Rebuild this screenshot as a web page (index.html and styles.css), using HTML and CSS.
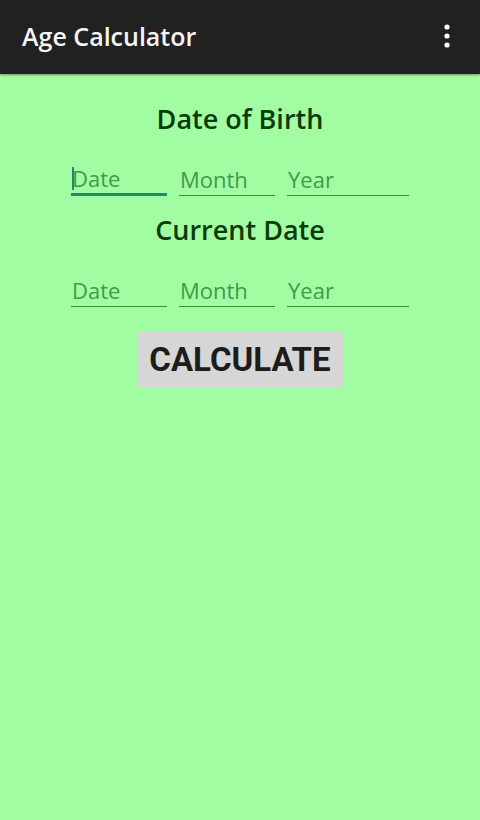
FILE: index.html
```html
<!DOCTYPE html>
<html>
<head>
<meta charset="utf-8">
<link rel="stylesheet" href="styles.css">
</head>
<body>
<header class="appbar">
  <span class="title">Age Calculator</span>
  <svg class="menu" width="10" height="26" viewBox="0 0 10 26">
    <circle cx="5" cy="4" r="2.6" fill="#fff"/>
    <circle cx="5" cy="13" r="2.6" fill="#fff"/>
    <circle cx="5" cy="22" r="2.6" fill="#fff"/>
  </svg>
</header>
<main class="content">
  <h2 class="heading first">Date of Birth</h2>
  <div class="row">
    <div class="field f-date focused"><span class="cursor"></span><span class="ph">Date</span></div>
    <div class="field f-month"><span class="ph">Month</span></div>
    <div class="field f-year"><span class="ph">Year</span></div>
  </div>
  <h2 class="heading">Current Date</h2>
  <div class="row">
    <div class="field f-date"><span class="ph">Date</span></div>
    <div class="field f-month"><span class="ph">Month</span></div>
    <div class="field f-year"><span class="ph">Year</span></div>
  </div>
  <button class="calc">CALCULATE</button>
</main>
</body>
</html>
```
FILE: styles.css
```css
html, body {
  margin: 0;
  padding: 0;
}
body {
  width: 480px;
  height: 820px;
  background: #a2fda2;
  font-family: "Open Sans", Lato, sans-serif;
  overflow: hidden;
}
.appbar {
  height: 74px;
  background: #212121;
  display: flex;
  align-items: center;
  justify-content: space-between;
  padding: 0 28px 0 22px;
  box-shadow: 0 1px 2px rgba(0,0,0,0.4);
}
.title {
  color: #f4f4f4;
  font-size: 25px;
  font-weight: 600;
  margin-top: -2px;
}
.menu {
  display: block;
  margin-top: -3px;
}
.content {
  display: flex;
  flex-direction: column;
  align-items: center;
}
.heading {
  margin: 0;
  font-weight: 600;
  font-size: 27px;
  color: #0b3a0b;
  line-height: 32px;
  margin-top: 18px;
}
.heading.first {
  margin-top: 29px;
}
.row {
  display: flex;
  gap: 12px;
  margin-top: 27px;
}
.field {
  position: relative;
  height: 34px;
  border-bottom: 1.5px solid #3a8a3a;
  display: flex;
  align-items: center;
  box-sizing: border-box;
}
.field.focused {
  border-bottom: 3px solid #1f8a6e;
}
.f-date { width: 96px; }
.f-month { width: 96px; }
.f-year { width: 122px; }
.ph {
  font-size: 22px;
  color: #3f9a4a;
  padding-left: 1px;
}
.cursor {
  position: absolute;
  left: 1px;
  top: 5px;
  width: 2px;
  height: 23px;
  background: #1f8a6e;
}
.calc {
  margin-top: 25px;
  width: 205px;
  height: 55px;
  border: none;
  background: #d6d6d6;
  font-family: Roboto, sans-serif;
  font-weight: bold;
  font-size: 33px;
  color: #1c1c1c;
  padding: 0;
}
```
